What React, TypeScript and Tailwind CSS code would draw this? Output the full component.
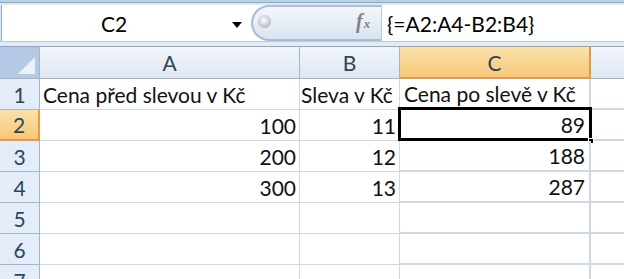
import React from "react";

const rows: { n: number; a: string; b: string; c: string }[] = [
  { n: 1, a: "Cena před slevou v Kč", b: "Sleva v Kč", c: "Cena po slevě v Kč" },
  { n: 2, a: "100", b: "11", c: "89" },
  { n: 3, a: "200", b: "12", c: "188" },
  { n: 4, a: "300", b: "13", c: "287" },
  { n: 5, a: "", b: "", c: "" },
  { n: 6, a: "", b: "", c: "" },
  { n: 7, a: "", b: "", c: "" },
];

export default function App() {
  return (
    <div
      className="w-[624px] h-[279px] overflow-hidden bg-white relative"
      style={{ fontFamily: "Lato, 'Open Sans', sans-serif" }}
    >
      {/* Formula bar */}
      <div className="h-[47px] flex flex-col bg-[#dde7f3]">
        <div className="h-[3px] bg-[#b5d2e6] border-b border-[#8fa8c6]" />
        <div className="flex-1 flex items-stretch pt-[2px]">
          <div className="w-[250px] ml-[1px] bg-white border-l border-[#8fa8c6] flex items-center relative">
            <span className="absolute left-0 w-[224px] text-center text-[21px] leading-none text-black">C2</span>
            <span className="absolute left-[230px] top-[17px] w-0 h-0 border-l-[5px] border-r-[5px] border-t-[6px] border-l-transparent border-r-transparent border-t-black" />
          </div>
          <div className="w-[130px] flex items-stretch bg-white">
            <div className="flex-1 rounded-l-full border-2 border-r-0 border-[#a9bdd6] bg-gradient-to-b from-[#f4f7fb] to-[#d9e3ef] flex items-center relative">
              <span className="absolute left-[5px] top-[8px] w-[13px] h-[13px] rounded-full bg-[radial-gradient(circle_at_45%_40%,#ffffff,#bfc5cc_60%,#8f98a3)]" />
              <span
                className="absolute left-[103px] top-[4px] text-[20px] italic font-bold text-[#808080] leading-none"
                style={{ fontFamily: "'Liberation Serif', serif" }}
              >
                f<span className="text-[13px] ml-[1px]">x</span>
              </span>
            </div>
          </div>
          <div className="flex-1 bg-white border-l border-[#b9c9dc] flex items-center pl-[5px] text-[21px] leading-none text-black">
            {"{=A2:A4-B2:B4}"}
          </div>
        </div>
        <div className="h-[1px] bg-[#b9c9dc]" />
        <div className="h-[4px] bg-[#e3ebf5]" />
        <div className="h-[1px] bg-[#8ea6c3]" />
      </div>

      {/* Grid */}
      <div
        className="grid text-[21px] leading-none"
        style={{ gridTemplateColumns: "40px 260px 100px 191px 33px", gridTemplateRows: "32px repeat(7, 31px)" }}
      >
        {/* corner */}
        <div className="bg-[#b4c9e5] border-r border-b border-[#9eb6ce] relative overflow-hidden">
          <div className="absolute right-[4px] bottom-[4px] w-0 h-0 border-b-[17px] border-l-[17px] border-b-[#eef2f8] border-l-transparent" />
        </div>
        {["A", "B"].map((l) => (
          <div
            key={l}
            className="bg-gradient-to-b from-[#f1f5fa] to-[#dfe7f1] border-r border-b border-[#9eb6ce] flex items-center justify-center text-[#2d4558]"
          >
            {l}
          </div>
        ))}
        <div className="bg-gradient-to-b from-[#fbe1ab] to-[#f5c878] border-r-2 border-b-2 border-[#f29536] flex items-center justify-center text-[#2d4558]">
          C
        </div>
        <div className="bg-gradient-to-b from-[#f1f5fa] to-[#dfe7f1] border-b border-[#9eb6ce]" />

        {rows.map((r) => (
          <React.Fragment key={r.n}>
            <div
              className={
                r.n === 2
                  ? "bg-gradient-to-b from-[#fbe1ab] to-[#f5c878] border-r-2 border-b-2 border-[#f29536] flex items-center justify-center text-[#2d4558]"
                  : "bg-[#e4ecf7] border-r border-b border-[#9eb6ce] flex items-center justify-center text-[#2d4558]"
              }
            >
              {r.n}
            </div>
            <div
              className={
                "border-r border-b border-[#d0d7e5] flex items-center px-[3px] text-[#111] whitespace-nowrap " +
                (r.n === 1 ? "justify-start" : "justify-end")
              }
            >
              {r.a}
            </div>
            <div
              className={
                "border-r border-b border-[#d0d7e5] flex items-center px-[3px] text-[#111] whitespace-nowrap " +
                (r.n === 1 ? "justify-start pl-[1px]" : "justify-end")
              }
            >
              {r.b}
            </div>
            <div
              className={
                "relative border-r-2 border-b-2 border-[#d0d7e5] flex items-center px-[4px] text-[#111] whitespace-nowrap " +
                (r.n === 1 ? "justify-start" : "justify-end")
              }
            >
              {r.c}
              {r.n === 2 && (
                <>
                  <div className="absolute left-[-2px] top-[-3px] right-[-3px] bottom-[-2px] border-[3px] border-black pointer-events-none" />
                  <div className="absolute right-[-5px] bottom-[-5px] w-[6px] h-[6px] bg-black border border-white" />
                </>
              )}
            </div>
            <div className="border-b-2 border-[#d0d7e5]" />
          </React.Fragment>
        ))}
      </div>
    </div>
  );
}
